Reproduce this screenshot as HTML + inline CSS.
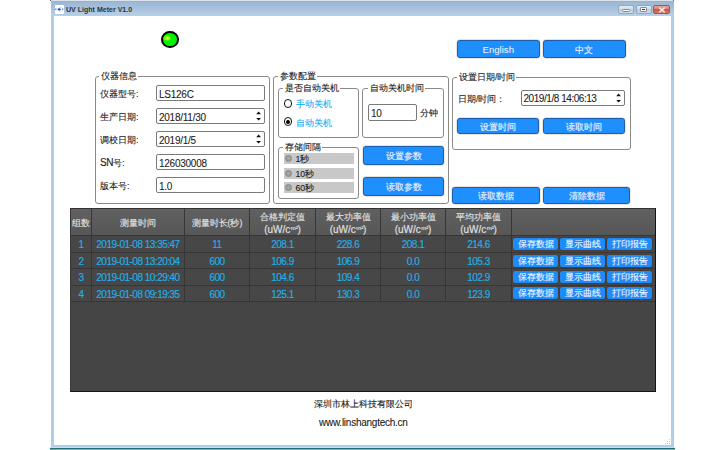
<!DOCTYPE html>
<html><head><meta charset="utf-8">
<style>
*{box-sizing:border-box;margin:0;padding:0}
html,body{width:726px;height:450px;overflow:hidden;background:#fff;font-family:"Liberation Sans",sans-serif;position:relative}
.a{position:absolute}
.win-top{left:51px;top:0;width:623px;height:1px;background:#dde4ec}
.title{left:51px;top:1px;width:623px;height:15px;background:linear-gradient(#8eabc8 0px,#9db8d6 1px,#a6c0dc 7px,#b3cde4 13px,#b6d0ea 15px)}
.bl{left:51px;top:16px;width:3px;height:431px;background:#b4cde6}
.br{left:671px;top:16px;width:3px;height:431px;background:#b4cde6}
.bb{left:51px;top:445px;width:623px;height:2px;background:#b4cde6}
.tk1{left:50px;top:447px;width:625px;height:1px;background:#bfe6f5}
.tk2{left:50px;top:448px;width:625px;height:1px;background:#1c6e7e}
.tk3{left:50px;top:449px;width:625px;height:1px;background:#a59c94}
.txt{white-space:nowrap;color:#303030}
.grp{border:1px solid #8a8a8a;border-radius:3px}
.gt{background:#fff;padding:0 1px 0 2px;margin-left:-1px;-webkit-text-stroke:0.1px #1a1a1a;font-size:8.7px;line-height:10px;color:#1a1a1a;white-space:nowrap}
.tb{border:1px solid #7a7a7a;border-radius:2px;background:#fff}
.btn{padding-top:1px;background:#1f8ffd;border:1px solid #1d5fae;box-shadow:0 0 0.6px 0.4px rgba(150,120,90,0.45);border-radius:3px;color:#eef0ff;-webkit-text-stroke:0.15px #eef0ff;font-size:8.7px;text-align:center;white-space:nowrap}
.lbl{font-size:8.7px;line-height:10px;color:#181818;-webkit-text-stroke:0.1px currentColor;white-space:nowrap}
.val{font-size:10px;line-height:11px;color:#202020;-webkit-text-stroke:0.08px #202020;white-space:nowrap;letter-spacing:-0.25px}
.th{font-size:8.7px;line-height:26px;padding-top:1px;height:26px;color:#e4e4e4;-webkit-text-stroke:0.12px #e4e4e4;text-align:center;white-space:nowrap}
.th2{font-size:8.7px;line-height:11.5px;padding-top:2.5px;height:26px;color:#e4e4e4;-webkit-text-stroke:0.12px #e4e4e4;text-align:center;white-space:nowrap}
.td{font-size:10px;line-height:16px;padding-top:1px;height:16px;color:#1fb0ea;-webkit-text-stroke:0.15px #1fb0ea;text-align:center;white-space:nowrap;letter-spacing:-0.5px}
.tbtn{width:45px;height:11.5px;line-height:11px;padding-top:0.5px;box-shadow:0 0 0.5px 0.5px rgba(70,45,30,0.6);background:#1e8cf8;border-radius:2px;color:#f4f6ff;-webkit-text-stroke:0.1px #f4f6ff;font-size:8.7px;text-align:center;white-space:nowrap}
.th2 .m2{font-size:6px;letter-spacing:-0.1px;vertical-align:2.5px;margin-left:0.5px}
.u{font-size:10px;letter-spacing:0px}
</style></head><body>
<!-- window frame -->
<div class="a win-top"></div>
<div class="a title"></div>
<div class="a bl"></div><div class="a br"></div><div class="a bb"></div>
<div class="a tk1"></div><div class="a tk2"></div><div class="a tk3"></div>
<div class="a" style="left:50px;top:0;width:1px;height:1px;background:#555"></div><div class="a" style="left:673px;top:0;width:1px;height:1px;background:#6a7a70"></div>
<!-- title icon -->
<div class="a" style="left:55px;top:5px;width:9px;height:9px;background:#fff;border-radius:1px"></div>
<svg class="a" style="left:54px;top:4px" width="11" height="11"><ellipse cx="1.8" cy="5.2" rx="0.9" ry="1" fill="#6aa6e6"/><ellipse cx="5.2" cy="5.4" rx="1.6" ry="1.1" fill="#1050c0"/><ellipse cx="8.6" cy="5.2" rx="0.8" ry="1" fill="#5a9ae0"/><ellipse cx="6.5" cy="3.4" rx="0.9" ry="0.6" fill="#b0d0f0"/><ellipse cx="5.8" cy="7.4" rx="0.9" ry="0.6" fill="#c0d8f2"/></svg>
<div class="a txt" style="left:66px;top:3px;font-size:8px;line-height:12px;font-weight:bold;color:#30343c;letter-spacing:0px;top:4.2px;transform:scaleX(0.88);transform-origin:0 0">UV Light Meter V1.0</div>
<!-- window buttons -->
<div class="a" style="left:618px;top:5px;width:16px;height:9px;border:1px solid #93a7bd;border-radius:2px;background:linear-gradient(#e3ecf6,#cfdcea 45%,#b9cce2 50%,#cddcec)"></div>
<div class="a" style="left:622px;top:9px;width:7.5px;height:2.6px;background:#fbfbfb;border:1px solid #8c8480;border-radius:1.3px"></div>
<div class="a" style="left:636px;top:5px;width:16px;height:9px;border:1px solid #93a7bd;border-radius:2px;background:linear-gradient(#e3ecf6,#cfdcea 45%,#b9cce2 50%,#cddcec)"></div>
<div class="a" style="left:640px;top:7px;width:7px;height:5px;background:#f4f4f4;border:1px solid #8c8c90;border-radius:1px"></div>
<div class="a" style="left:642px;top:9px;width:3px;height:1px;background:#303a70"></div>
<div class="a" style="left:653px;top:5px;width:17px;height:9px;border:1px solid #9a5a50;border-radius:2px;background:linear-gradient(#eba898,#dc7a68 45%,#c8503c 52%,#d87a68)"></div>
<svg class="a" style="left:657.5px;top:6.5px" width="8" height="6"><path d="M1.3 0.6l5.4 4.8M6.7 0.6l-5.4 4.8" stroke="#eeeaea" stroke-width="1.5"/></svg>
<!-- LED -->
<div class="a" style="left:161.2px;top:31.2px;width:17.6px;height:16.6px;border-radius:50%;background:radial-gradient(ellipse 30% 22% at 30% 40%,#f0ff30 0,#b0ff10 45%,#00f400 100%),#00f000;border:2px solid #000"></div>

<!-- language buttons -->
<div class="a btn" style="left:457px;top:40px;width:82.5px;height:18px;line-height:16px;font-size:9.6px;-webkit-text-stroke:0.05px #eef0ff">English</div>
<div class="a btn" style="left:543px;top:40px;width:82.5px;height:18px;line-height:16px">中文</div>

<!-- group 仪器信息 -->
<div class="a grp" style="left:95px;top:76px;width:175px;height:128px"></div>
<div class="a gt" style="left:100px;top:71px">仪器信息</div>
<div class="a lbl" style="left:100px;top:89px">仪器型号:</div>
<div class="a lbl" style="left:100px;top:112px">生产日期:</div>
<div class="a lbl" style="left:100px;top:135px">调校日期:</div>
<div class="a lbl" style="left:100px;top:158px"><span style="font-size:10px;letter-spacing:-0.3px">SN</span>号:</div>
<div class="a lbl" style="left:100px;top:181px">版本号:</div>
<div class="a tb" style="left:156px;top:85px;width:109px;height:16px"></div>
<div class="a tb" style="left:156px;top:108px;width:109px;height:16px"></div>
<div class="a tb" style="left:156px;top:131px;width:109px;height:16px"></div>
<div class="a tb" style="left:156px;top:154px;width:109px;height:16px"></div>
<div class="a tb" style="left:156px;top:177px;width:109px;height:16px"></div>
<div class="a val" style="left:159px;top:89px">LS126C</div>
<div class="a val" style="left:159px;top:112px">2018/11/30</div>
<div class="a val" style="left:159px;top:135px">2019/1/5</div>
<div class="a val" style="left:159px;top:158px">126030008</div>
<div class="a val" style="left:159px;top:181px">1.0</div>
<svg class="a" style="left:255px;top:110px" width="7" height="12"><path d="M1.2 4.2L3.6 1.6L6 4.2zM1.2 8L3.6 10.6L6 8z" fill="#111"/></svg>
<svg class="a" style="left:255px;top:133px" width="7" height="12"><path d="M1.2 4.2L3.6 1.6L6 4.2zM1.2 8L3.6 10.6L6 8z" fill="#111"/></svg>

<!-- group 参数配置 -->
<div class="a grp" style="left:273px;top:76px;width:176px;height:128px"></div>
<div class="a gt" style="left:279px;top:71px">参数配置</div>
<div class="a grp" style="left:278px;top:88px;width:81px;height:50px"></div>
<div class="a gt" style="left:284px;top:83px">是否自动关机</div>
<div class="a" style="left:284px;top:99.2px;width:8.4px;height:8.4px;border:1.5px solid #111;border-radius:50%;background:#fff"></div>
<div class="a lbl" style="left:296px;top:99px;color:#12b0f6">手动关机</div>
<div class="a" style="left:284px;top:117.4px;width:8.4px;height:8.4px;border:1.5px solid #111;border-radius:50%;background:#fff"></div>
<div class="a" style="left:286.2px;top:119.6px;width:4px;height:4px;border-radius:50%;background:#000"></div>
<div class="a lbl" style="left:296px;top:117.5px;color:#12b0f6">自动关机</div>

<div class="a grp" style="left:362px;top:88px;width:82px;height:50px"></div>
<div class="a gt" style="left:369px;top:83px">自动关机时间</div>
<div class="a tb" style="left:368px;top:104px;width:49px;height:17px"></div>
<div class="a val" style="left:371px;top:108px">10</div>
<div class="a lbl" style="left:420px;top:108px">分钟</div>

<div class="a grp" style="left:278px;top:147px;width:81px;height:52px"></div>
<div class="a gt" style="left:284px;top:142px">存储间隔</div>
<div class="a" style="left:284px;top:153px;width:70px;height:11px;background:#c8c8c8"></div>
<div class="a" style="left:284px;top:168px;width:70px;height:11px;background:#c8c8c8"></div>
<div class="a" style="left:284px;top:182px;width:70px;height:11px;background:#c8c8c8"></div>
<div class="a" style="left:284.6px;top:154.8px;width:7.6px;height:7.6px;border:1px solid #858585;border-radius:50%;background:radial-gradient(#a8a8a8,#989898)"></div>
<div class="a" style="left:284.6px;top:169.8px;width:7.6px;height:7.6px;border:1px solid #858585;border-radius:50%;background:radial-gradient(#a8a8a8,#989898)"></div>
<div class="a" style="left:284.6px;top:183.8px;width:7.6px;height:7.6px;border:1px solid #858585;border-radius:50%;background:radial-gradient(#a8a8a8,#989898)"></div>
<div class="a lbl" style="left:295.5px;top:154px">1秒</div>
<div class="a lbl" style="left:295.5px;top:169px">10秒</div>
<div class="a lbl" style="left:295.5px;top:183px">60秒</div>

<div class="a btn" style="left:363px;top:146px;width:81px;height:19px;line-height:17px">设置参数</div>
<div class="a btn" style="left:363px;top:177px;width:81px;height:19px;line-height:17px">读取参数</div>

<!-- group 设置日期/时间 -->
<div class="a grp" style="left:452px;top:77px;width:179px;height:73px"></div>
<div class="a gt" style="left:458px;top:72px">设置日期/时间</div>
<div class="a lbl" style="left:458px;top:94px">日期/时间：</div>
<div class="a tb" style="left:521px;top:90px;width:104px;height:16px"></div>
<div class="a val" style="left:523.5px;top:93.2px;letter-spacing:-0.45px">2019/1/8 14:06:13</div>
<svg class="a" style="left:614.5px;top:92px" width="7" height="12"><path d="M1.2 4.2L3.6 1.6L6 4.2zM1.2 8L3.6 10.6L6 8z" fill="#111"/></svg>
<div class="a btn" style="left:457px;top:118px;width:82px;height:16px;line-height:14px">设置时间</div>
<div class="a btn" style="left:543px;top:118px;width:82px;height:16px;line-height:14px">读取时间</div>

<div class="a btn" style="left:452px;top:187px;width:88px;height:17px;line-height:15px">读取数据</div>
<div class="a btn" style="left:543px;top:187px;width:87px;height:17px;line-height:15px">清除数据</div>

<!-- table -->
<div class="a" style="left:70px;top:208px;width:586px;height:184px;background:#454545;border:1px solid #141414;border-top-color:#333;border-left-color:#383838"></div>
<div class="a" style="left:71px;top:209px;width:584px;height:26px;background:linear-gradient(#606060,#575757)"></div>
<div class="a" style="left:71px;top:236px;width:584px;height:65px;background:#474747"></div>
<div class="a" style="left:71px;top:235px;width:584px;height:1px;background:#363636"></div>
<div class="a" style="left:71px;top:252px;width:584px;height:1px;background:#363636"></div>
<div class="a" style="left:71px;top:268px;width:584px;height:1px;background:#363636"></div>
<div class="a" style="left:71px;top:285px;width:584px;height:1px;background:#363636"></div>
<div class="a" style="left:71px;top:301px;width:584px;height:1px;background:#363636"></div>
<div class="a" style="left:91px;top:209px;width:1px;height:92px;background:#363636"></div>
<div class="a" style="left:184px;top:209px;width:1px;height:92px;background:#363636"></div>
<div class="a" style="left:249px;top:209px;width:1px;height:92px;background:#363636"></div>
<div class="a" style="left:315px;top:209px;width:1px;height:92px;background:#363636"></div>
<div class="a" style="left:380px;top:209px;width:1px;height:92px;background:#363636"></div>
<div class="a" style="left:445px;top:209px;width:1px;height:92px;background:#363636"></div>
<div class="a" style="left:511px;top:209px;width:1px;height:92px;background:#363636"></div>
<div class="a th" style="left:71px;top:209px;width:20px">组数</div>
<div class="a th" style="left:92px;top:209px;width:92px">测量时间</div>
<div class="a th" style="left:185px;top:209px;width:64px">测量时长(秒)</div>
<div class="a th2" style="left:250px;top:209px;width:65px">合格判定值<br><span class="u">(uW/c<span class="m2">m²</span>)</span></div>
<div class="a th2" style="left:316px;top:209px;width:64px">最大功率值<br><span class="u">(uW/c<span class="m2">m²</span>)</span></div>
<div class="a th2" style="left:381px;top:209px;width:64px">最小功率值<br><span class="u">(uW/c<span class="m2">m²</span>)</span></div>
<div class="a th2" style="left:446px;top:209px;width:65px">平均功率值<br><span class="u">(uW/c<span class="m2">m²</span>)</span></div>
<div class="a td" style="left:71px;top:236px;width:20px">1</div>
<div class="a td" style="left:92px;top:236px;width:92px">2019-01-08 13:35:47</div>
<div class="a td" style="left:185px;top:236px;width:64px">11</div>
<div class="a td" style="left:250px;top:236px;width:65px">208.1</div>
<div class="a td" style="left:316px;top:236px;width:64px">228.6</div>
<div class="a td" style="left:381px;top:236px;width:64px">208.1</div>
<div class="a td" style="left:446px;top:236px;width:65px">214.6</div>
<div class="a tbtn" style="left:513px;top:238px">保存数据</div>
<div class="a tbtn" style="left:560px;top:238px">显示曲线</div>
<div class="a tbtn" style="left:607px;top:238px">打印报告</div>
<div class="a td" style="left:71px;top:253px;width:20px">2</div>
<div class="a td" style="left:92px;top:253px;width:92px">2019-01-08 13:20:04</div>
<div class="a td" style="left:185px;top:253px;width:64px">600</div>
<div class="a td" style="left:250px;top:253px;width:65px">106.9</div>
<div class="a td" style="left:316px;top:253px;width:64px">106.9</div>
<div class="a td" style="left:381px;top:253px;width:64px">0.0</div>
<div class="a td" style="left:446px;top:253px;width:65px">105.3</div>
<div class="a tbtn" style="left:513px;top:255px">保存数据</div>
<div class="a tbtn" style="left:560px;top:255px">显示曲线</div>
<div class="a tbtn" style="left:607px;top:255px">打印报告</div>
<div class="a td" style="left:71px;top:269px;width:20px">3</div>
<div class="a td" style="left:92px;top:269px;width:92px">2019-01-08 10:29:40</div>
<div class="a td" style="left:185px;top:269px;width:64px">600</div>
<div class="a td" style="left:250px;top:269px;width:65px">104.6</div>
<div class="a td" style="left:316px;top:269px;width:64px">109.4</div>
<div class="a td" style="left:381px;top:269px;width:64px">0.0</div>
<div class="a td" style="left:446px;top:269px;width:65px">102.9</div>
<div class="a tbtn" style="left:513px;top:271px">保存数据</div>
<div class="a tbtn" style="left:560px;top:271px">显示曲线</div>
<div class="a tbtn" style="left:607px;top:271px">打印报告</div>
<div class="a td" style="left:71px;top:286px;width:20px">4</div>
<div class="a td" style="left:92px;top:286px;width:92px">2019-01-08 09:19:35</div>
<div class="a td" style="left:185px;top:286px;width:64px">600</div>
<div class="a td" style="left:250px;top:286px;width:65px">125.1</div>
<div class="a td" style="left:316px;top:286px;width:64px">130.3</div>
<div class="a td" style="left:381px;top:286px;width:64px">0.0</div>
<div class="a td" style="left:446px;top:286px;width:65px">123.9</div>
<div class="a tbtn" style="left:513px;top:287px">保存数据</div>
<div class="a tbtn" style="left:560px;top:287px">显示曲线</div>
<div class="a tbtn" style="left:607px;top:287px">打印报告</div>

<svg class="a" style="left:664px;top:438px" width="7" height="7"><g fill="#c8c8c8"><rect x="5" y="1" width="1" height="1"/><rect x="3" y="3" width="1" height="1"/><rect x="5" y="3" width="1" height="1"/><rect x="1" y="5" width="1" height="1"/><rect x="3" y="5" width="1" height="1"/><rect x="5" y="5" width="1" height="1"/></g></svg>
<!-- footer -->
<div class="a lbl" style="left:314px;top:399px;font-size:8.7px">深圳市林上科技有限公司</div>
<div class="a val" style="left:319px;top:416.5px;color:#202020">www.linshangtech.cn</div>
</body></html>
